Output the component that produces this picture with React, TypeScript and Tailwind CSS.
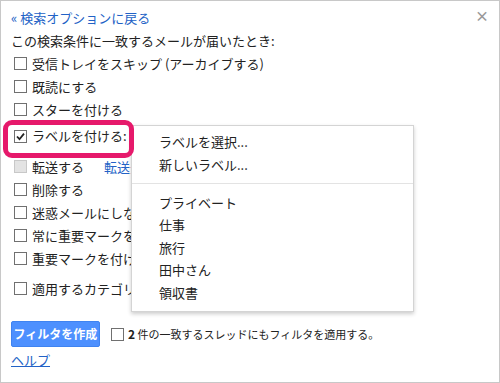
import React from 'react';

const Box = ({ checked = false, disabled = false }: { checked?: boolean; disabled?: boolean }) => (
  <span
    className={`relative inline-block w-[13px] h-[13px] shrink-0 border ${
      disabled ? 'border-[#c8c8c8] bg-[#e3e3e3]' : 'border-[#707070] bg-white'
    }`}
  >
    {checked && (
      <svg viewBox="0 0 13 13" className="absolute -left-px -top-px w-[13px] h-[13px]">
        <path d="M3 6.5 L5.5 9.2 L10 3.6" fill="none" stroke="#222" strokeWidth="1.8" />
      </svg>
    )}
  </span>
);

const Row = ({ label, className = '' }: { label: string; className?: string }) => (
  <div className={`flex items-center gap-[5px] h-[23px] pl-[13px] whitespace-nowrap ${className}`}>
    <Box />
    <span>{label}</span>
  </div>
);

const labels = ['プライベート', '仕事', '旅行', '田中さん', '領収書'];

const App = () => {
  return (
    <div
      className="relative w-[500px] h-[383px] bg-white border border-[#c8c8c8] text-[13px] text-[#222] overflow-hidden"
      style={{ fontFamily: '"Noto Sans CJK JP", "Noto Sans", sans-serif' }}
    >
      <button className="absolute right-[10px] top-[7px] text-[#999] text-[14px] leading-none font-bold">×</button>

      <div className="flex flex-col pl-[10px] pt-[6px]">
        <div className="h-[22px] flex items-center text-[#2262c6]">« 検索オプションに戻る</div>
        <div className="h-[23px] flex items-center">この検索条件に一致するメールが届いたとき:</div>

        <div className="-ml-[10px]">
          <Row label="受信トレイをスキップ (アーカイブする)" />
          <Row label="既読にする" />
          <Row label="スターを付ける" />
          <div className="flex items-center gap-[5px] h-[30px] pl-[13px]">
            <Box checked />
            <span>ラベルを付ける:</span>
          </div>
          <div className="flex items-center gap-[5px] h-[23px] pl-[13px] mt-[4px] whitespace-nowrap">
            <Box disabled />
            <span>転送する</span>
            <span className="ml-[15px] text-[#2262c6]">転送先を追加</span>
          </div>
          <Row label="削除する" />
          <Row label="迷惑メールにしない" />
          <Row label="常に重要マークを付ける" />
          <Row label="重要マークを付けない" />
          <Row label="適用するカテゴリ:" className="mt-[7px]" />
        </div>

        <div className="flex items-center mt-[21px] h-[26px]">
          <button className="h-[26px] w-[89px] rounded-[2px] bg-[#4d90fe] border border-[#3f83f0] text-white text-[12px] font-bold">
            フィルタを作成
          </button>
          <div className="flex items-center gap-[4px] ml-[11px]">
            <Box />
            <span className="text-[11px]">
              <b className="text-[12px]">2</b> 件の一致するスレッドにもフィルタを適用する。
            </span>
          </div>
        </div>
        <div className="h-[22px] mt-[2px] flex items-center">
          <span className="text-[#2262c6] underline">ヘルプ</span>
        </div>
      </div>

      {/* label dropdown */}
      <div className="absolute left-[130px] top-[124px] w-[283px] bg-white border border-[#d4d4d4] shadow-[0_2px_4px_rgba(0,0,0,0.2)] pt-[4px] pb-[7px]">
        <div className="pl-[27px] h-[23px] flex items-center">ラベルを選択...</div>
        <div className="pl-[27px] h-[23px] flex items-center">新しいラベル...</div>
        <div className="my-[7px] border-t border-[#e3e3e3]" />
        {labels.map((l) => (
          <div key={l} className="pl-[27px] h-[22.5px] flex items-center">
            {l}
          </div>
        ))}
      </div>

      {/* highlight */}
      <div className="absolute left-[2px] top-[119px] w-[131px] h-[38px] border-[5px] border-[#e6196b] rounded-[9px]" />
    </div>
  );
};

export default App;
